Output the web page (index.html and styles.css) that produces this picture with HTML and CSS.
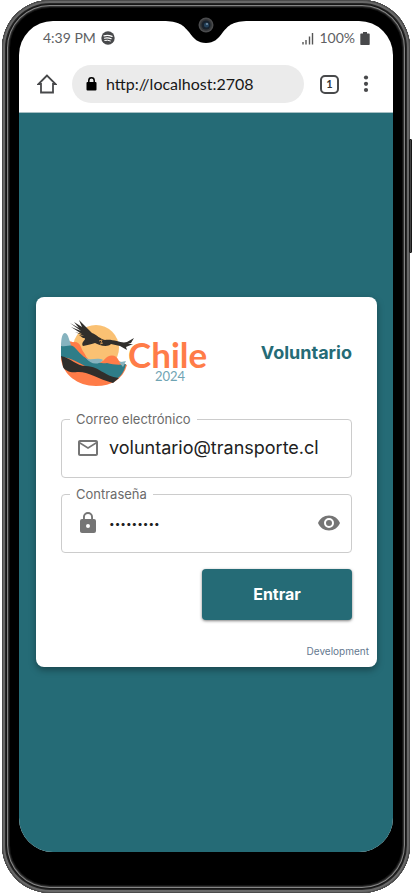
FILE: index.html
```html
<!DOCTYPE html>
<html lang="es">
<head>
<meta charset="utf-8">
<meta name="viewport" content="width=device-width, initial-scale=1">
<title>Chile 2024 - Voluntario</title>
<link rel="stylesheet" href="styles.css">
</head>
<body>
<div class="phone">
  <span class="side-key"></span>
  <svg class="notch" width="86" height="24" viewBox="0 0 86 24" aria-hidden="true">
    <path d="M0 0H86C70 0 66 4 60 11C55 18 51 22 43 22S31 18 26 11C20 4 16 0 0 0Z" fill="#000"/>
  </svg>
  <svg class="camera" width="16" height="16" viewBox="0 0 16 16" aria-hidden="true">
    <circle cx="8" cy="8" r="7.500" fill="#4a4b4d"/><circle cx="8" cy="8" r="6" fill="#343638"/>
    <circle cx="8" cy="8" r="4.500" fill="#17212c"/><circle cx="8.500" cy="8" r="2.500" fill="#24425c"/><circle cx="9" cy="7" r="1" fill="#7b96aa"/>
  </svg>
  <div class="screen">
    <header class="browser">
      <div class="status">
        <span>4:39 PM</span>
        <svg width="14" height="14" viewBox="0 0 14 14" aria-hidden="true"><circle cx="7" cy="7" r="6.700" fill="#48494b"/><g fill="none" stroke="#fff" stroke-linecap="round"><path d="M3 4.800q4-1.200 8 .6" stroke-width="1.300"/><path d="M3.400 7.200q3.500-.9 6.800.6" stroke-width="1.100"/><path d="M3.800 9.400q3-.7 5.600.5"/></g></svg>
        <svg class="signal" width="12" height="13" viewBox="0 0 12 13" aria-hidden="true"><path d="M1 10v2.500M4 8v4.500M7.500 4.500v8M10.500 1v11.500" stroke="#555" stroke-width="1.400"/></svg>
        <span>100%</span>
        <svg width="10" height="13" viewBox="0 0 10 13" aria-hidden="true"><path d="M3 0h4v1.500h2a.7.7 0 0 1 .7.7v10a.7.7 0 0 1-.7.7H1a.7.7 0 0 1-.7-.7v-10a.7.7 0 0 1 .7-.7h2z" fill="#48494b"/></svg>
      </div>
      <div class="toolbar">
        <button class="plain" type="button" aria-label="Inicio"><svg width="20" height="20" viewBox="0 0 20 20"><path d="M10 1.500L1.500 10H4v8.500h12V10h2.500z" fill="none" stroke="#48494b" stroke-width="1.800"/></svg></button>
        <div class="address">
          <svg width="11" height="14" viewBox="0 0 11 14" aria-hidden="true"><rect x=".5" y="5" width="10" height="8.500" rx="1" fill="#000"/><path d="M2.800 6V3.500a2.700 2.700 0 0 1 5.400 0V6" fill="none" stroke="#000" stroke-width="1.500"/></svg>
          <input type="text" aria-label="URL" value="http://localhost:2708">
        </div>
        <button class="plain tab" type="button">1</button>
        <button class="plain" type="button" aria-label="Menú"><svg width="6" height="18" viewBox="0 0 6 18"><g fill="#48494b"><circle cx="3" cy="2.500" r="2.100"/><circle cx="3" cy="8.800" r="2.100"/><circle cx="3" cy="15" r="2.100"/></g></svg></button>
      </div>
    </header>
    <main class="page">
      <form class="card">
        <div class="brand">
          <svg width="150" height="72" viewBox="0 0 150 72" role="img" aria-label="Chile 2024">
            <circle cx="35" cy="29" r="23" fill="#fac173"/>
            <path d="M0 25Q9 19 16 26C24 34 26 43 36 45C43 42 48 36 54 40L66 46C62 60 51 67 35 67C16 67 2 55 0 40Z" fill="#ff7c48"/>
            <path d="M0 27C0 14 4 11 7 17L10 26L10 35L0 30Z" fill="#86b3bf"/>
            <path d="M0 27C8 28 13 24 18 30C24 38 26 43 31 41C38 43 41 45 46 44C53 46 59 46 65 45C63 54 58 60 53 61C30 53 14 38 0 38Z" fill="#2e7d88"/>
            <path d="M25 39C30 42 36 38 42 41C37 47 29 45 25 39Z" fill="#86b3bf"/>
            <path d="M10 24Q17 21 20 28C22 34 25 35 25 39C18 35 15 28 10 26ZM43 41C48 35 55 35 58 42C53 45 47 45 43 41Z" fill="#ff7c48"/>
            <path d="M58 43Q61 43 65 42L62 48Z" fill="#86b3bf"/>
            <path d="M0 37C10 39 15 47 25 47C40 48 42 57 58 59L52 64C35 59 26 52 16 53C10 54 4 52 2 48Z" fill="#302e2b"/>
            <path d="M9 4L18 9L13 3L21 8L18 1L31 14C36 16 39 20 44 21C54 20 60 25 66 23L73 19L70 24L67 25H72L65 28L66 31L59 27L50 25C46 29 38 26 34 24C31 25 27 26 22 27C19 23 28 19 22 19L18 16L23 17L14 13L21 15L10 8L20 12Z" fill="#302e2b"/>
            <path d="M38 22l3-1-1 3M42 24l-3 1" fill="none" stroke="#c99152"/>
            <text class="logo-name" x="67" y="49">Chile</text>
            <text class="logo-year" x="94" y="62">2024</text>
          </svg>
          <h1>Voluntario</h1>
        </div>
        <div class="field">
          <label for="email">Correo electrónico</label>
          <svg width="24" height="24" viewBox="0 0 24 24" aria-hidden="true"><path fill="#757575" d="M22 6c0-1.100-.9-2-2-2H4c-1.100 0-2 .9-2 2v12c0 1.100.9 2 2 2h16c1.100 0 2-.9 2-2zm-2 0l-8 5-8-5zm0 12H4V8l8 5 8-5z"/></svg>
          <input id="email" type="email" value="voluntario@transporte.cl">
        </div>
        <div class="field">
          <label for="password">Contraseña</label>
          <svg width="24" height="24" viewBox="0 0 24 24" aria-hidden="true"><path fill="#757575" d="M18 8h-1V6A5 5 0 0 0 7 6v2H6a2 2 0 0 0-2 2v10c0 1.100.9 2 2 2h12a2 2 0 0 0 2-2V10a2 2 0 0 0-2-2zm-6 9a2 2 0 1 1 0-4 2 2 0 0 1 0 4zm3.100-9H8.900V6a3.100 3.100 0 0 1 6.200 0z"/></svg>
          <input id="password" class="password" type="password" value="chile2024">
          <button class="plain" type="button" aria-label="Mostrar contraseña"><svg width="24" height="24" viewBox="0 0 24 24"><path fill="#757575" d="M12 4.500C7 4.500 2.730 7.610 1 12c1.730 4.390 6 7.500 11 7.500s9.270-3.110 11-7.500C21.270 7.610 17 4.500 12 4.500zM12 17a5 5 0 1 1 0-10 5 5 0 0 1 0 10zm0-8a3 3 0 1 0 0 6 3 3 0 0 0 0-6z"/></svg></button>
        </div>
        <button class="submit" type="button">Entrar</button>
        <p class="environment">Development</p>
      </form>
    </main>
  </div>
</div>
</body>
</html>
```
FILE: styles.css
```css
* { box-sizing: border-box; }
body { margin: 0; background: #fff; font-family: Inter, "Liberation Sans", sans-serif; }
input, button { font: inherit; }
.phone {
  position: relative;
  display: flex;
  min-height: 100vh;
  margin: 0 2px;
  padding: 21px 17px 41px;
  border-radius: 48px;
  background: #000;
  box-shadow: inset 0 0 0 1px #4b4b4b, inset 0 0 0 3px #686868, inset 0 0 0 4px #262626, inset 0 0 0 5px #171717, inset 0 0 0 6px #858585, inset 0 0 0 7px #333, inset 0 0 0 8px #151515;
}
.side-key { position: absolute; top: 139px; right: -2px; width: 3px; height: 114px; border: 1px solid #171717; border-radius: 1px; background: #444; }
.notch { position: absolute; top: 21px; left: 50%; transform: translateX(-50%); z-index: 1; }
.camera { position: absolute; top: 17px; left: 50%; transform: translateX(-50%); z-index: 2; }
.screen { flex: 1; min-width: 0; display: flex; flex-direction: column; overflow: hidden; border-radius: 34px; background: #fff; }
.browser { height: 92px; border-bottom: 1px solid #a7c0c4; }
.status { display: flex; align-items: center; gap: 5px; padding: 8px 23px 0 24px; height: 26px; color: #606164; font: 14px/18px Lato, sans-serif; }
.signal { margin-left: auto; }
.toolbar { display: flex; align-items: center; padding: 18px 24px 0 18px; }
.plain { display: flex; padding: 0; border: 0; background: none; }
.address { display: flex; flex: 1; min-width: 0; align-items: center; gap: 9px; height: 38px; margin: 0 16px 0 15px; padding: 0 14px; border-radius: 19px; background: #ebebeb; }
.address input { flex: 1; min-width: 0; padding: 0; border: 0; background: none; color: #171717; font: 16px/20px Lato, sans-serif; }
.tab { width: 19px; height: 19px; margin-right: 24px; align-items: center; justify-content: center; border: 2px solid #48494b; border-radius: 5px; color: #333; font: bold 11px/14px Lato, sans-serif; }
.page { flex: 1; display: flex; align-items: center; padding: 0 16px 2px 17px; background: #256b76; }
.card { flex: 1; min-width: 0; display: flex; flex-direction: column; padding: 22px 25px 8px; border-radius: 8px; background: #fff; box-shadow: 0 3px 7px rgba(0, 0, 0, .35); }
.brand { display: flex; align-items: center; justify-content: space-between; height: 72px; margin-bottom: 28px; }
.brand svg { flex: none; }
.logo-name { font: bold 35px Lato, sans-serif; fill: #ff7c48; }
.logo-year { font: 13px Lato, sans-serif; fill: #6fa4b3; }
h1 { margin: 0; padding-bottom: 3px; color: #256b76; font-size: 18px; line-height: 24px; }
.field { position: relative; display: flex; align-items: center; height: 59px; margin-bottom: 16px; padding: 0 10px 0 14px; border: 1px solid #ccc; border-radius: 4px; }
.field label { position: absolute; top: -9px; left: 8px; padding: 0 6px; background: #fff; color: #6b6b6b; font-size: 13px; line-height: 16px; }
.field input { flex: 1; min-width: 0; margin-left: 9px; padding: 0; border: 0; background: none; color: #212121; font-size: 18px; line-height: 24px; outline: 0; }
.field .password { font-size: 10px; }
.submit { align-self: flex-end; width: 150px; height: 51px; border: 0; border-radius: 4px; background: #256b76; color: #fff; font-size: 16px; font-weight: bold; box-shadow: 0 1px 3px rgba(0, 0, 0, .5); }
.environment { margin: 23px -17px 0 0; color: #65798f; font-size: 10px; line-height: 16px; text-align: right; }
```
